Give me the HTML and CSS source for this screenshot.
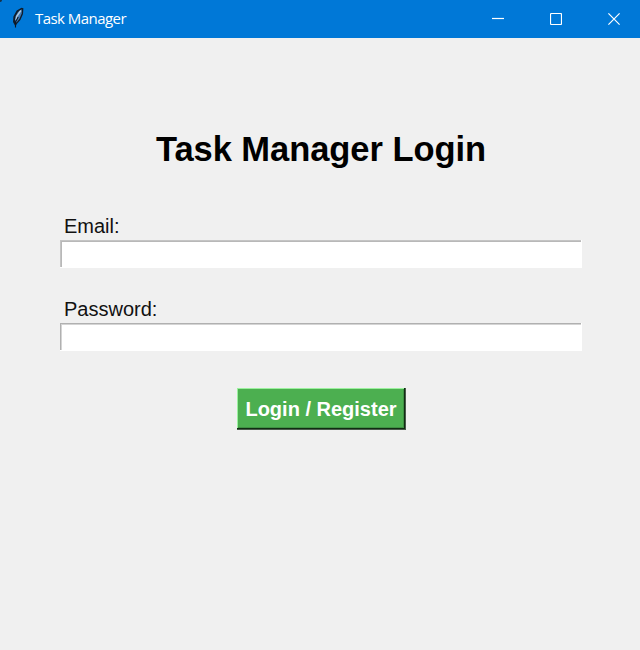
FILE: index.html
```html
<!DOCTYPE html>
<html lang="en">
<head>
<meta charset="utf-8">
<title>Task Manager</title>
<link rel="stylesheet" href="styles.css">
</head>
<body>
<div class="window">
  <header class="titlebar">
    <svg class="feather" width="14" height="22" viewBox="0 0 14 22">
      <path d="M4.5 19.5 2 15 2.4 9.5 5.7 3.5 10.5 .8 12.4 1.2 12 7 9.4 13 5.8 17Z" fill="#101c2b"/>
      <path d="M4 14.5 4.5 9.5 7 5 10.8 2.2 10.7 6.5 8.3 12 5.5 15.5Z" fill="#427bb5"/>
      <path d="M5 13 6 9 9.8 3.5" fill="none" stroke="#b5c8dc" stroke-width="1.5"/>
      <path d="M4.5 20.5V15L7.2 10" fill="none" stroke="#0b1725" stroke-width="1.1"/>
    </svg>
    <span class="caption">Task Manager</span>
    <div class="controls">
      <svg width="12" height="12" viewBox="0 0 12 12"><path d="M0 5.5H12"/></svg>
      <svg width="12" height="12" viewBox="0 0 12 12"><rect x=".5" y=".5" width="11" height="11" rx="1"/></svg>
      <svg width="12" height="12" viewBox="0 0 12 12"><path d="M.4.4 11.6 11.6M11.6.4.4 11.6"/></svg>
    </div>
  </header>
  <main class="login">
    <h1>Task Manager Login</h1>
    <form>
      <label class="email-label" for="email">Email:</label>
      <input id="email" type="text">
      <label class="password-label" for="password">Password:</label>
      <input id="password" type="password">
      <button type="button">Login / Register</button>
    </form>
  </main>
</div>
</body>
</html>
```
FILE: styles.css
```css
* { box-sizing: border-box; }
body {
  margin: 0;
  background: #f0f0f0;
  font-family: "Liberation Sans", Arial, sans-serif;
  color: #000;
}
.window { height: 650px; overflow: hidden; }
.titlebar {
  display: flex;
  align-items: center;
  height: 38px;
  padding: 0 20px 0 11px;
  background: radial-gradient(circle at 0 0, #15324c 1.5px, transparent 2.5px), #0078d7;
  color: #fff;
}
.feather { margin-top: -2px; }
.caption {
  margin: -2px 0 0 10px;
  font: 15px/20px "Open Sans", sans-serif;
  letter-spacing: -0.55px;
}
.controls { display: flex; gap: 46px; margin-left: auto; margin-right: 0; }
.controls svg { fill: none; stroke: #fff; stroke-width: 1.2; }
.login { padding: 91px 58px 0 60px; }
h1 {
  margin: 0;
  font-size: 34.5px;
  line-height: 40px;
  letter-spacing: -0.05px;
  text-align: center;
  white-space: nowrap;
}
form { display: flex; flex-direction: column; }
label {
  width: max-content;
  height: 24px;
  padding-left: 4px;
  font-size: 20px;
  line-height: 24px;
  color: #111;
}
.email-label { margin-top: 45px; }
.password-label { margin-top: 29px; }
input {
  width: 522px;
  height: 28px;
  margin: 2px 0 0;
  padding: 0 4px;
  border: 0;
  border-radius: 0;
  background: #fff;
  box-shadow: inset -1px -1px #fff, inset 1px 1px #c4c4c4, inset 2px 2px #b8b8b8;
  font: 20px "Liberation Sans", sans-serif;
  outline: 0;
}
#password {
  box-shadow: inset -1px -1px #fff, inset 1px 1px #b0b0b0, inset 2px 2px #d4d4d4;
}
button {
  align-self: center;
  width: 169px;
  height: 42px;
  margin-top: 37px;
  padding: 0;
  border: 0;
  border-radius: 0;
  background: #4caf50;
  box-shadow: inset -1px -1px #4a5a4b, inset -2px -2px #102c12, inset 1px 1px #9bf29e, inset -3px -3px #3f9143;
  color: #fff;
  font: bold 20px/42px "Liberation Sans", Arial, sans-serif;
  white-space: nowrap;
}
```
